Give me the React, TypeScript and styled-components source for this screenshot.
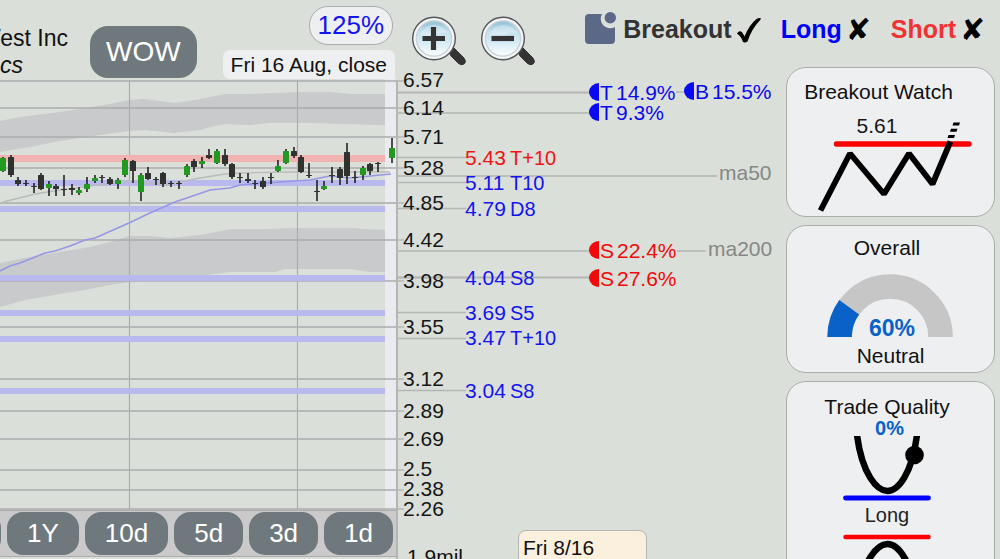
import React from "react";
import styled, { createGlobalStyle } from "styled-components";

const GlobalStyle = createGlobalStyle`
  *, *::before, *::after { box-sizing: border-box; }
  body {
    margin: 0;
    background: #dadfd9;
    color: #111;
    font-family: "Liberation Sans", Arial, sans-serif;
  }
`;

const colors = {
  line: "#abadac",
  band: "#c8cacb",
  panel: "#eeeff1",
  button: "#6f787d",
  blue: "#1414ee",
  red: "#f01414",
  score: "#0a62c8",
};

const Page = styled.div`
  display: grid;
  grid-template-columns: 40% minmax(0, 1fr) 214px;
  grid-template-rows: 67px 13px minmax(0, 1fr);
  grid-template-areas:
    "title tools tools"
    "title . side"
    "chart chart side";
  height: 100vh;
  overflow: hidden;
`;

const TitleBar = styled.header`
  grid-area: title;
  display: flex;
  align-items: flex-start;
`;

const Company = styled.div`
  width: 68px;
  margin-top: 25px;
  overflow: hidden;
  font-size: 23px;
  line-height: 27px;
  white-space: nowrap;
`;

const CompanyName = styled.div`
  display: flex;
  justify-content: flex-end;
`;

const Sector = styled.div`
  font-style: italic;
`;

const PillButton = styled.button<{ $large?: boolean }>`
  flex: none;
  height: ${(p) => (p.$large ? 52 : 43)}px;
  padding: 0 ${(p) => (p.$large ? 16 : 20)}px;
  border: 0;
  border-radius: ${(p) => (p.$large ? 18 : 16)}px;
  background: ${colors.button};
  color: #fff;
  font-family: inherit;
  font-size: ${(p) => (p.$large ? 28 : 26)}px;
`;

const TickerSlot = styled.div`
  display: flex;
  margin: 26px 0 0 22px;
`;

const Readout = styled.div`
  display: flex;
  flex-direction: column;
  align-items: flex-end;
  gap: 5px;
  margin-left: auto;
  padding: 6px 5px 0 0;
`;

const ScaleButton = styled.button`
  height: 39px;
  margin-right: 2px;
  padding: 0 8px;
  border: 1px solid ${colors.line};
  border-radius: 19px;
  background: ${colors.panel};
  color: ${colors.blue};
  font-family: inherit;
  font-size: 26px;
`;

const DateChip = styled.div`
  padding: 0 8px;
  border-radius: 7px 7px 0 7px;
  background: ${colors.panel};
  font-size: 21px;
  line-height: 29px;
  white-space: nowrap;
`;

const Tools = styled.div`
  grid-area: tools;
  display: flex;
  align-items: flex-start;
  gap: 12px;
  padding: 15px 12px 0 11px;
`;

const ZoomButton = styled.button`
  display: flex;
  padding: 0;
  border: 0;
  background: none;
`;

const StatusList = styled.div`
  display: flex;
  align-items: center;
  gap: 17px;
  height: 29px;
  margin-left: auto;
  font-size: 25px;
  font-weight: bold;
`;

const Status = styled.div<{ $color: string }>`
  display: flex;
  align-items: center;
  gap: 4px;
  color: ${(p) => p.$color};
`;

const StatusIcon = styled.svg`
  margin: 0 3px 4px 0;
`;

const Mark = styled.span`
  width: 28px;
  color: #000;
  font-family: "DejaVu Sans", sans-serif;
  font-size: 30px;
  line-height: 29px;
`;

const ChartArea = styled.main`
  grid-area: chart;
  display: grid;
  grid-template-columns: minmax(0, 396fr) minmax(0, 390fr);
`;

const Pane = styled.section<{ $axis?: boolean }>`
  display: flex;
  flex-direction: column;
  border-left: ${(p) => (p.$axis ? `2px solid #b4b6b5` : "0")};
`;

const Drawing = styled.svg`
  display: block;
  flex: none;
  width: 100%;
  height: auto;
  overflow: visible;
`;

const Ranges = styled.nav`
  display: flex;
  flex: none;
  justify-content: flex-end;
  gap: 6px;
  padding: 1px 3px;
  border: solid ${colors.line};
  border-width: 1px 0;
  overflow: hidden;
  background: #cacaca;
`;

const VolumeRow = styled.div`
  display: flex;
  align-items: flex-start;
  font-size: 21px;
`;

const VolumeLabel = styled.span`
  width: 120px;
  padding: 14px 0 0 9px;
  line-height: 26px;
`;

const HoverDate = styled.div`
  width: 129px;
  padding: 3px 4px;
  border: 1px solid #b5b5b5;
  border-radius: 8px;
  background: #fbf0de;
  line-height: 28px;
`;

const Sidebar = styled.aside`
  grid-area: side;
  display: flex;
  flex-direction: column;
  gap: 8px;
  padding-right: 5px;
`;

const Card = styled.section<{ $top: number; $bottom: number }>`
  display: flex;
  flex: none;
  flex-direction: column;
  align-items: center;
  padding: ${(p) => p.$top}px 0 ${(p) => p.$bottom}px;
  border: 1px solid ${colors.line};
  border-radius: 20px;
  background: ${colors.panel};
`;

const CardTitle = styled.h2<{ $inset: number }>`
  margin: 0;
  padding-right: ${(p) => p.$inset}px;
  font-size: 21px;
  font-weight: normal;
  line-height: 26px;
  white-space: nowrap;
`;

const Verdict = styled.div`
  font-size: 21px;
  line-height: 26px;
`;

const Quality = styled.div`
  padding-right: 2px;
  color: ${colors.score};
  font-size: 20px;
  font-weight: bold;
  line-height: 16px;
`;

const Side = styled.div`
  padding-right: 7px;
  color: #222;
  font-size: 20px;
  line-height: 28px;
`;

const CardArt = styled.svg<{ $inset?: number }>`
  display: block;
  margin-right: ${(p) => p.$inset ?? 0}px;
`;

/* x, high, body top, body bottom, low, rising */
type Candle = [number, number, number, number, number, number];
const candles: Candle[] = [
  [3, 157, 158, 171, 172, 1], [11, 155, 157, 175, 177, 0], [18, 177, 180, 184, 186, 0],
  [26, 180, 183, 184, 186, 0], [34, 183, 186, 187, 193, 0], [41, 173, 175, 189, 190, 0],
  [49, 181, 184, 188, 196, 1], [56, 184, 186, 189, 196, 0], [64, 175, 189, 190, 196, 0],
  [72, 184, 188, 190, 195, 0], [79, 187, 190, 193, 195, 1], [87, 177, 184, 189, 192, 1],
  [95, 175, 178, 181, 183, 1], [102, 175, 177, 178, 183, 0], [110, 177, 179, 184, 185, 0],
  [118, 178, 180, 184, 189, 1], [125, 158, 160, 175, 177, 1], [133, 160, 161, 171, 183, 0],
  [141, 173, 175, 192, 201, 1], [148, 167, 173, 179, 180, 0], [156, 177, 179, 180, 185, 0],
  [163, 172, 173, 184, 187, 0], [171, 181, 183, 184, 187, 0], [179, 181, 183, 184, 189, 0],
  [187, 164, 166, 175, 177, 1], [194, 159, 161, 167, 172, 0], [202, 157, 161, 164, 168, 1],
  [209, 149, 155, 158, 159, 0], [217, 149, 151, 163, 164, 1], [225, 149, 155, 164, 166, 0],
  [232, 163, 164, 177, 179, 0], [240, 173, 177, 178, 183, 0], [248, 173, 179, 181, 183, 0],
  [255, 180, 183, 184, 189, 0], [263, 177, 181, 187, 189, 0], [271, 173, 177, 178, 184, 0],
  [278, 160, 166, 171, 172, 1], [286, 149, 151, 163, 164, 1], [294, 147, 151, 156, 158, 0],
  [301, 155, 157, 172, 173, 0], [309, 163, 175, 176, 178, 0], [317, 180, 191, 192, 201, 0],
  [324, 181, 186, 189, 190, 1], [332, 167, 175, 176, 183, 0], [340, 167, 169, 178, 185, 0],
  [347, 143, 152, 176, 184, 0], [355, 171, 177, 178, 183, 0], [363, 166, 168, 175, 180, 1],
  [370, 163, 164, 171, 175, 0], [378, 162, 163, 164, 172, 0], [392, 138, 148, 158, 163, 1],
];

/* label, gridline y, text baseline */
const prices: [string, number, number][] = [
  ["6.57", 81, 87], ["6.14", 108, 115], ["5.71", 137, 144], ["5.28", 168, 175],
  ["4.85", 203, 210], ["4.42", 240, 247], ["3.98", 281, 288], ["3.55", 327, 334],
  ["3.12", 379, 386], ["2.89", 411, 418], ["2.69", 439, 446], ["2.5", 470, 476],
  ["2.38", 490, 496], ["2.26", 509, 516],
];

/* price, pattern, line y, text baseline, colour */
const levels: [string, string, number, number, string][] = [
  ["5.43", "T+10", 157, 165, colors.red], ["5.11", "T10", 182, 190, colors.blue],
  ["4.79", "D8", 208, 216, colors.blue], ["4.04", "S8", 277, 285, colors.blue],
  ["3.69", "S5", 312, 320, colors.blue], ["3.47", "T+10", 338, 345, colors.blue],
  ["3.04", "S8", 390, 398, colors.blue],
];

/* x, centre y, letter, value, value offset, colour */
const targets: [number, number, string, string, number, string][] = [
  [599, 92, "T", "14.9%", 17, "#0a0af0"], [599, 112, "T", "9.3%", 17, "#0a0af0"],
  [694, 91, "B", "15.5%", 18, "#0a0af0"], [599, 250, "S", "22.4%", 18, "#f00a0a"],
  [599, 278, "S", "27.6%", 18, "#f00a0a"],
];

const supports = [183, 209, 278, 313, 339, 391];

const PricePlot = () => (
  <Drawing viewBox="0 80 396 430" role="img" aria-label="Daily price chart">
    <path
      fill={colors.band}
      d="M0 121 20 117 60 112 85 108 110 104 129 100 145 99 175 103 200 99 225 94 250 94 300 92 330 92 350 94 385 94V125L340 124 310 123 270 123 250 125 225 124 215 126 200 130 175 133 145 130 129 131 100 135 60 141 30 147 0 152Z"
    />
    <path
      fill={colors.band}
      d="M0 263 30 257 60 252 90 247 110 242 129 236 150 236 170 238 200 235 232 229 270 229 290 228 350 228 365 229 385 230V272L370 272 350 269 285 269 275 272 230 272 200 276 129 282 110 285 90 289 60 294 25 300 0 307Z"
    />
    <rect x="385" y="79" width="11" height="432" fill="#e9ebee" />
    {prices.map(([label, y]) => (
      <path key={label} d={`M0 ${y}H396`} stroke={colors.line} strokeWidth="1.4" />
    ))}
    <path d="M129.5 80V510M297.5 80V510" stroke={colors.line} strokeWidth="1.2" />
    <rect x="0" y="155" width="385" height="7" fill="#f1b2b2" />
    {supports.map((y) => (
      <rect key={y} x="0" y={y - 3} width="385" height="6" fill="#b9b9ef" />
    ))}
    <path
      fill="none"
      stroke="#b9bcbb"
      strokeWidth="1.3"
      d="M3 202 35 194 60 190 90 186 129 181 165 185 200 178 225 174 240 173 290 172 350 172 390 172"
    />
    <path
      fill="none"
      stroke="#9797e6"
      strokeWidth="1.6"
      d="M0 271 10 266 20 263 45 253 55 251 70 246 85 240 95 238 129 223 150 213 175 202 200 193.5 210 190 230 188 240 185 265 183 280 182 310 180 330 176 350 178 391 174"
    />
    {candles.map(([x, high, top, bottom, low, up]) => (
      <g key={x}>
        <path d={`M${x} ${high}V${low}`} stroke="#161616" strokeWidth="1.5" />
        <rect
          x={x - 3}
          y={top}
          width="6"
          height={bottom - top}
          rx="0.5"
          fill={up ? "#229a22" : "#303230"}
        />
      </g>
    ))}
  </Drawing>
);

const ScalePlot = () => (
  <Drawing
    viewBox="398 80 388 450"
    role="img"
    aria-label="Price scale with levels"
    fontSize="21"
    fill="#161616"
  >
    <g stroke="#b3b6b4" strokeWidth="1.4" fill="none">
      <path d="M398 92.5H590M398 277.5H590" strokeWidth="2.2" />
      <path d="M398 113H590M398 176H717M398 251H590M677 251H706M676 92H685" />
      {levels.map(([price, , y]) => (
        <path key={price} d={`M398 ${y + 0.5}H466`} />
      ))}
      {prices.map(([label, y]) => (
        <path key={label} d={`M398 ${y}H404`} />
      ))}
    </g>
    {prices.map(([label, , base]) => (
      <text key={label} x="403" y={base}>
        {label}
      </text>
    ))}
    {levels.map(([price, pattern, , base, color]) => (
      <g key={price} fill={color}>
        <text x="465" y={base}>
          {price}
        </text>
        <text x="510" y={base} fontSize="20">
          {pattern}
        </text>
      </g>
    ))}
    {targets.map(([x, y, letter, value, offset, color]) => (
      <g key={value} fill={color}>
        <path d={`M${x} ${y - 9}a10 9 0 0 0 0 18z`} />
        <text x={x + 1} y={y + 8}>
          {letter}
        </text>
        <text x={x + offset} y={y + 8}>
          {value}
        </text>
      </g>
    ))}
    <g fill="#858885">
      <text x="719" y="180">
        ma50
      </text>
      <text x="708" y="256">
        ma200
      </text>
    </g>
  </Drawing>
);

const Magnifier = ({ id, plus }: { id: string; plus?: boolean }) => (
  <svg width="57" height="51" viewBox="0 0 57 51" aria-hidden="true">
    <defs>
      <linearGradient id={id} x1="0" y1="0" x2="0" y2="1">
        <stop offset="0" stopColor="#8fbfd4" />
        <stop offset="0.3" stopColor="#c2e0ee" />
        <stop offset="0.6" stopColor="#d5ebf5" />
        <stop offset="1" stopColor="#fdfefe" />
      </linearGradient>
    </defs>
    <path d="M38 37 43 33 53 43Q56 47 53 49 50 51 47 48L40 41Z" fill="#343434" stroke="#343434" />
    <circle cx="23" cy="23.5" r="21.3" fill="#f3f5f6" stroke="#55585a" strokeWidth="1.4" />
    <circle cx="23" cy="23.5" r="17.6" fill={`url(#${id})`} stroke="#c8d2d8" strokeWidth="1.4" />
    <path d="M9 20Q14 10 23 10 33 10 37 19 30 15 24 21 16 22 9 20Z" fill="#fff" opacity="0.3" />
    <path d={plus ? "M11.5 23.5H34M22.5 12V35" : "M11.5 23.5H34"} stroke="#343434" strokeWidth="5.2" />
  </svg>
);

const CheckMark = () => (
  <svg width="28" height="29" viewBox="0 0 28 29" role="img" aria-label="yes">
    <path d="M1 18.500Q3.500 15 6 17.200 7.500 19 8.500 21.500 13.500 9.500 20.500 4 22.500 2.800 24.800 3.200 25 4 24.200 5 15.500 14 11.500 26.500 9 28 7 27 5.500 21.500 1 18.500Z" />
  </svg>
);

const App = () => (
  <>
    <GlobalStyle />
    <Page>
      <TitleBar>
        <Company>
          <CompanyName>West Inc</CompanyName>
          <Sector>cs</Sector>
        </Company>
        <TickerSlot>
          <PillButton $large>WOW</PillButton>
        </TickerSlot>
        <Readout>
          <ScaleButton>125%</ScaleButton>
          <DateChip>Fri 16 Aug, close</DateChip>
        </Readout>
      </TitleBar>

      <Tools>
        <ZoomButton aria-label="Zoom in">
          <Magnifier id="lens-in" plus />
        </ZoomButton>
        <ZoomButton aria-label="Zoom out">
          <Magnifier id="lens-out" />
        </ZoomButton>
        <StatusList>
          <Status $color="#333">
            <StatusIcon width="33" height="32" viewBox="0 0 33 32" aria-hidden="true">
              <path
                fill="#5b6888"
                d="M6 2H19A9.5 9.5 0 0 0 32 15V28Q32 32 28 32H6Q2 32 2 28V6Q2 2 6 2Z"
              />
              <circle cx="27.3" cy="5.800" r="5.700" fill="#5b6888" />
            </StatusIcon>
            Breakout
            <CheckMark />
          </Status>
          <Status $color="#0000fa">
            Long
            <Mark>✘</Mark>
          </Status>
          <Status $color="#f03232">
            Short
            <Mark>✘</Mark>
          </Status>
        </StatusList>
      </Tools>

      <ChartArea>
        <Pane>
          <PricePlot />
          <Ranges aria-label="Chart range">
            {["5Y", "1Y", "10d", "5d", "3d", "1d"].map((range) => (
              <PillButton key={range}>{range}</PillButton>
            ))}
          </Ranges>
        </Pane>
        <Pane $axis>
          <ScalePlot />
          <VolumeRow>
            <VolumeLabel>1.9mil</VolumeLabel>
            <HoverDate>Fri 8/16</HoverDate>
          </VolumeRow>
        </Pane>
      </ChartArea>

      <Sidebar>
        <Card $top={11} $bottom={4}>
          <CardTitle $inset={24}>Breakout Watch</CardTitle>
          <CardArt width="156" height="107" viewBox="817 105 156 107" $inset={-9}>
            <text x="877" y="133" fontSize="21" textAnchor="middle" fill="#161616">
              5.61
            </text>
            <path d="M836.5 144H969" stroke="#f00" strokeWidth="5.5" strokeLinecap="round" />
            <path
              d="M820.5 210.5 850 153.5 884 194 909 153.5 932.5 184 950.5 141.5"
              fill="none"
              stroke="#000"
              strokeWidth="5.8"
              strokeLinejoin="bevel"
            />
            <path d="M948.5 135h6.500l-1 3h-6.500zM951 128.800h6.500l-1 3h-6.500zM953.500 122.600h6.500l-1 3h-6.500z" />
          </CardArt>
        </Card>

        <Card $top={9} $bottom={3}>
          <CardTitle $inset={7}>Overall</CardTitle>
          <CardArt width="128" height="82" viewBox="827 261 128 82">
            <path
              d="M839.6 337A50.5 50.5 0 0 1 940.6 337"
              fill="none"
              stroke="#c6c6c6"
              strokeWidth="24.5"
            />
            <path
              d="M839.6 337A50.5 50.5 0 0 1 849.2 307.3"
              fill="none"
              stroke={colors.score}
              strokeWidth="24.5"
            />
            <text
              x="892"
              y="336"
              fontSize="23"
              fontWeight="bold"
              textAnchor="middle"
              fill={colors.score}
            >
              60%
            </text>
          </CardArt>
          <Verdict>Neutral</Verdict>
        </Card>

        <Card $top={12} $bottom={12}>
          <CardTitle $inset={7}>Trade Quality</CardTitle>
          <Quality>0%</Quality>
          <CardArt width="90" height="65" viewBox="842 436 90 65" $inset={7}>
            <path
              d="M857 435C862 474 877 491 887.5 491S912 474 917 435"
              fill="none"
              stroke="#000"
              strokeWidth="6.5"
            />
            <circle cx="914.5" cy="455" r="9.3" />
            <path d="M845.5 498H928.5" stroke="#00f" strokeWidth="4.8" strokeLinecap="round" />
          </CardArt>
          <Side>Long</Side>
          <CardArt width="90" height="72" viewBox="842 529 90 72" $inset={7}>
            <path d="M845.5 537H928.5" stroke="#f00" strokeWidth="4.5" strokeLinecap="round" />
            <path
              d="M857 600C862 561 877 544 887.5 544S912 561 917 600"
              fill="none"
              stroke="#000"
              strokeWidth="6.5"
            />
          </CardArt>
          <Side>Short</Side>
        </Card>
      </Sidebar>
    </Page>
  </>
);

export default App;
